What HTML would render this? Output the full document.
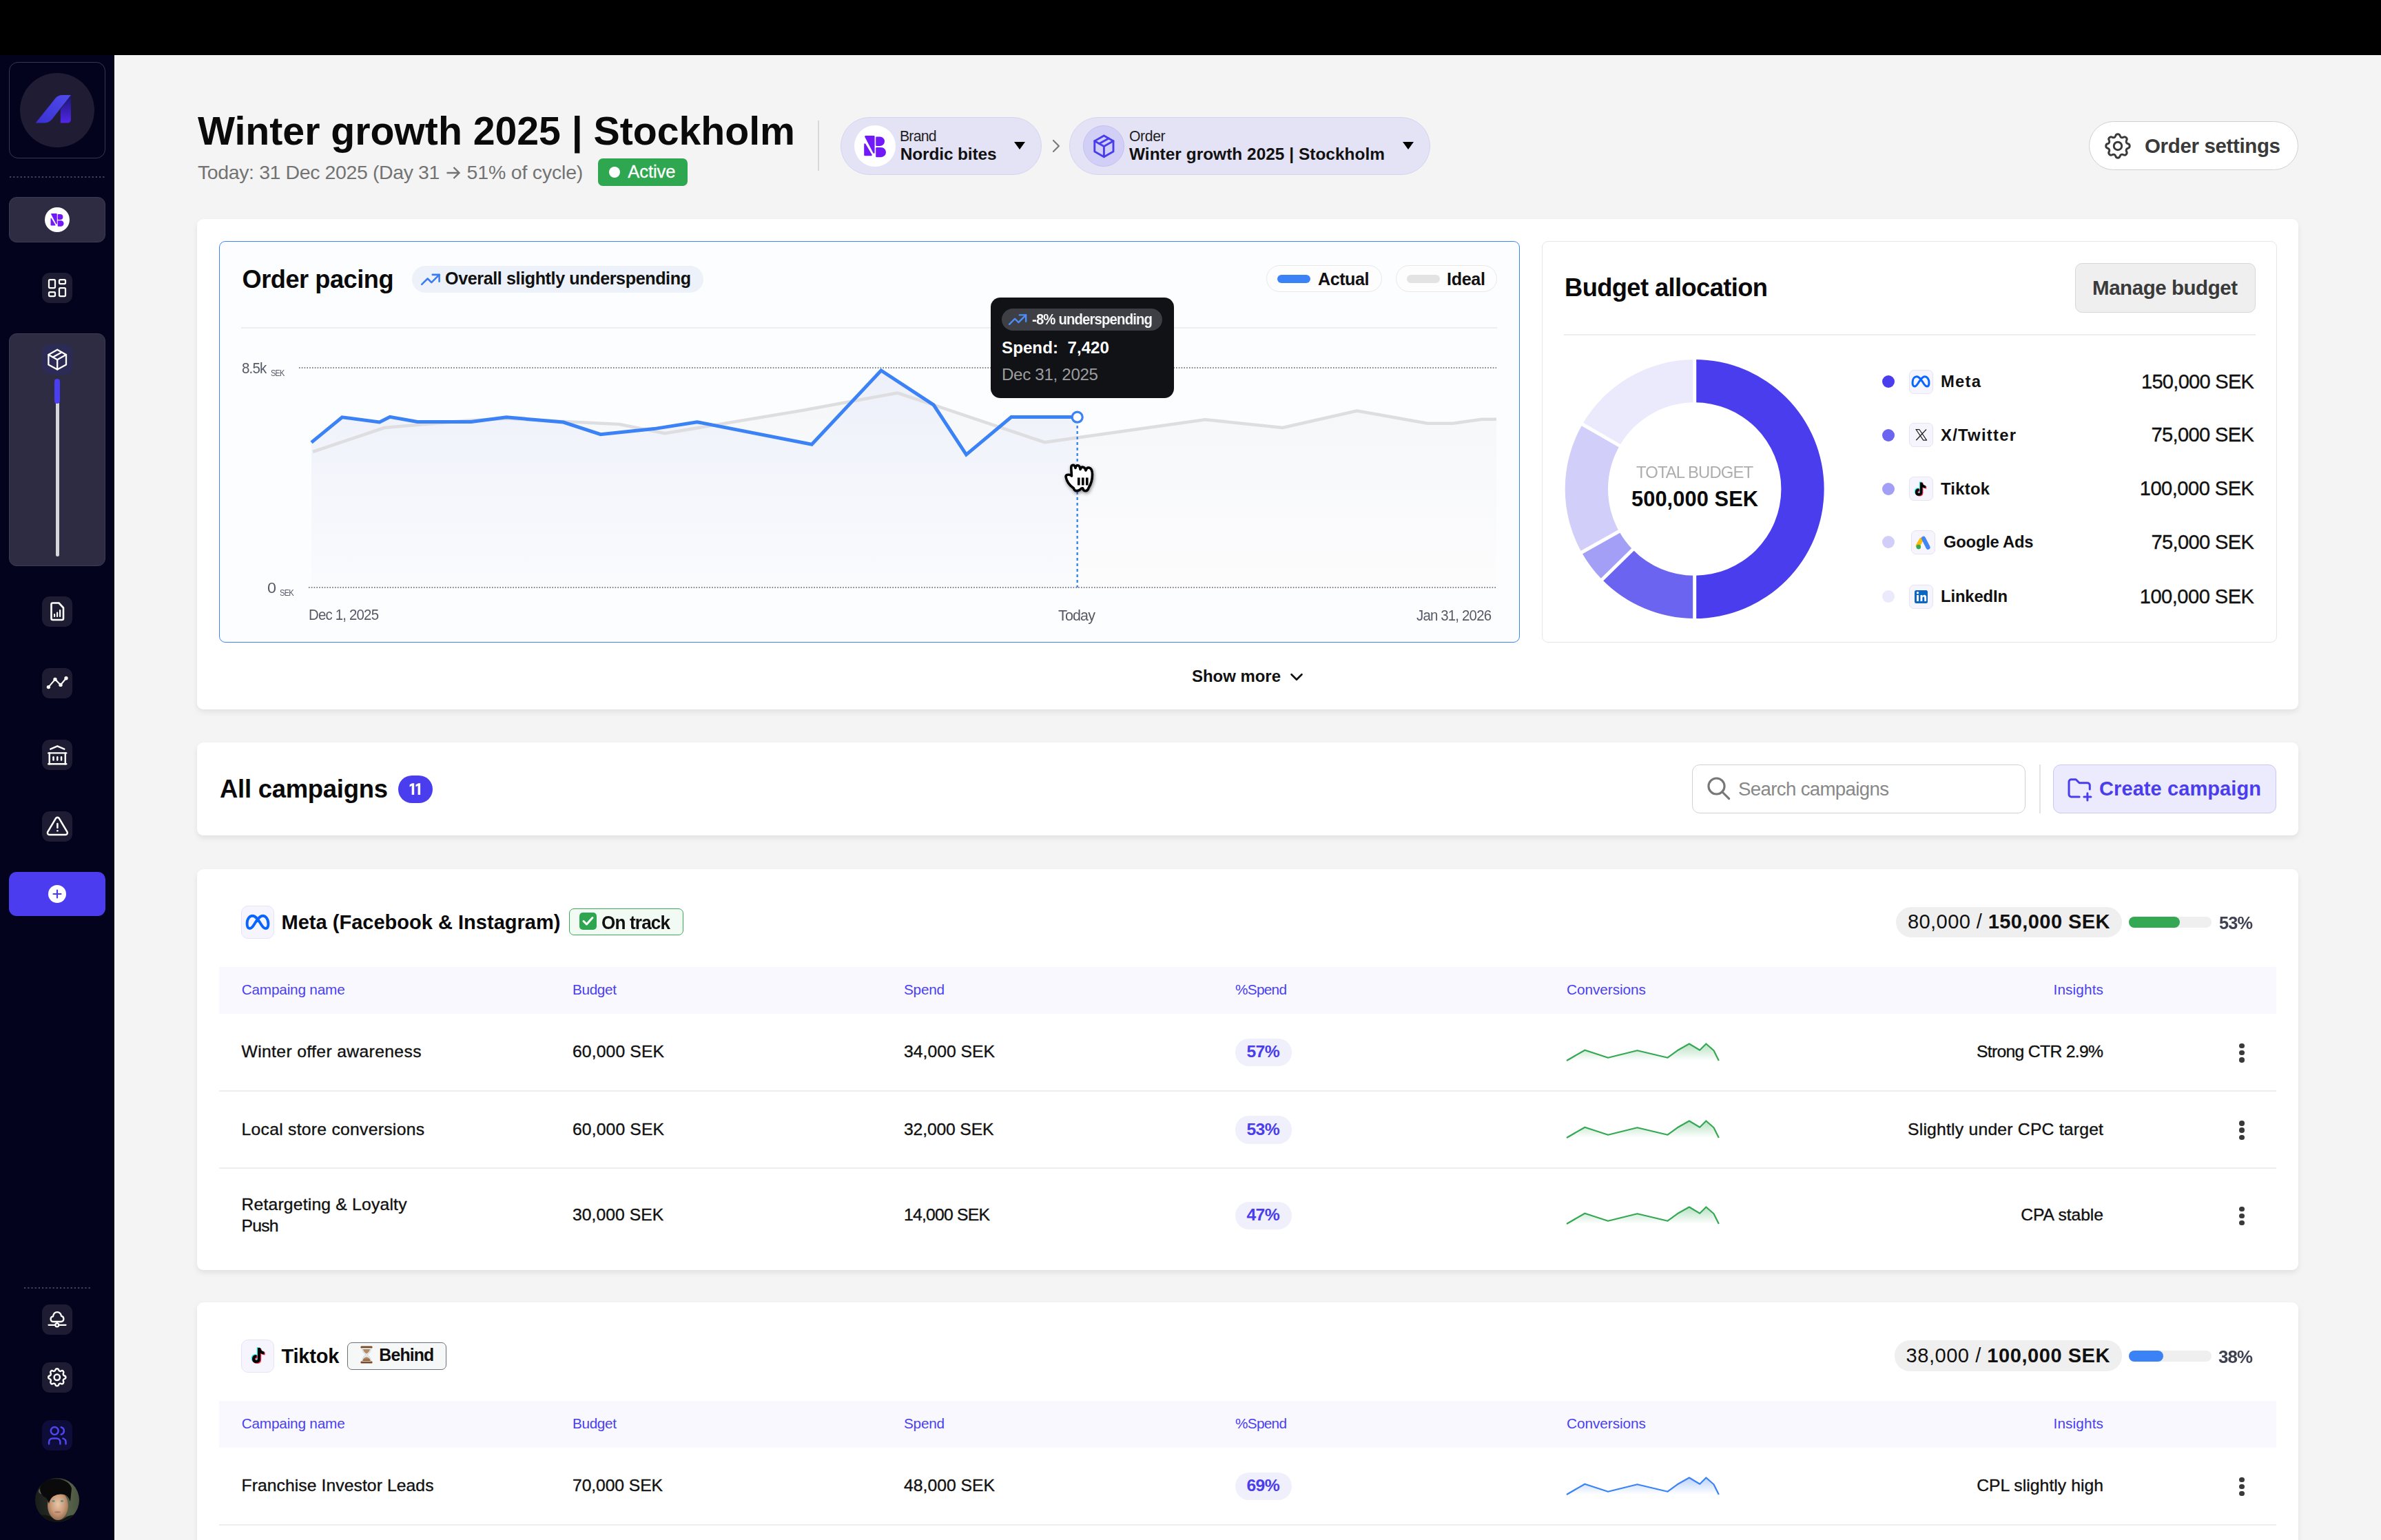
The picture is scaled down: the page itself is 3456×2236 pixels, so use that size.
<!DOCTYPE html><html><head><meta charset="utf-8"><title>Order dashboard</title><style>
html,body{margin:0;padding:0}
html{overflow:hidden;background:#f4f4f4}
body{width:3456px;height:2236px;position:relative;overflow:hidden;background:#f4f4f4;font-family:"Liberation Sans",sans-serif}
b{font-weight:700}
@media (max-width:2400px){html{zoom:0.5}}
</style></head><body>
<div style="position:absolute;left:0px;top:0px;width:3456px;height:80px;background:#000"></div>
<div style="position:absolute;left:0px;top:80px;width:166px;height:2156px;background:#03031d"></div>
<div style="position:absolute;left:13px;top:90px;width:140px;height:140px;box-sizing:border-box;border:1px solid #393750;border-radius:13px"></div>
<div style="position:absolute;left:29px;top:106px;width:108px;height:108px;border-radius:50%;background:#1f1c33"></div>
<svg style="position:absolute;left:40px;top:125px;" width="80" height="70" viewBox="0 0 80 70"><defs><linearGradient id="lg1" x1="0" y1="1" x2="1" y2="0"><stop offset="0" stop-color="#3a2fd2"/><stop offset="1" stop-color="#4f4cec"/></linearGradient>
<linearGradient id="lg2" x1="0" y1="0" x2="0" y2="1"><stop offset="0" stop-color="#1a1470"/><stop offset="1" stop-color="#5226ea"/></linearGradient></defs>
<path d="M11.7 53.4 L25.5 53.4 Q31 53.4 35.6 48 L63 12.9 L50 12.9 Q44.5 12.9 40.6 17.5 Z" fill="url(#lg1)"/>
<path d="M47.8 33.9 L63 12.9 L63 47.4 Q63 53.4 58 53.4 L47.8 53.4 Z" fill="url(#lg2)"/></svg>
<svg style="position:absolute;left:13px;top:255px;" width="140" height="4" viewBox="0 0 140 4"><line x1="1" y1="2" x2="140" y2="2" stroke="#5b5a70" stroke-width="1.6" stroke-dasharray="2.2 3"/></svg>
<div style="position:absolute;left:13px;top:286px;width:140px;height:66px;box-sizing:border-box;border:1px solid #3d3b52;border-radius:11px;background:#2e2c43"></div>
<div style="position:absolute;left:65px;top:301px;width:36px;height:36px;border-radius:50%;background:#fff"></div>
<svg style="position:absolute;left:65px;top:301px;" width="36" height="36" viewBox="0 0 36 36"><g transform="scale(0.6)"><g fill="#7119f7" stroke="#7119f7" stroke-width="2.4" stroke-linejoin="round"><path d="M16.3 16.3 L28.4 16.3 L28.4 39.5 Z"/><path d="M15.4 27.5 L24.6 43 L15.4 43 Z"/><path d="M32.4 17.7 L37.3 17.7 A5.5 5.5 0 0 1 37.3 28.7 L32.4 28.7 Z"/><path d="M32.4 33.1 L38.85 33.1 A5.95 5.95 0 0 1 38.85 45 L32.4 45 Z"/></g></g></svg>
<div style="position:absolute;left:61px;top:396px;width:44px;height:44px;border-radius:11px;background:#1e1c33"></div>
<svg style="position:absolute;left:65.00px;top:400.00px" width="36.00" height="36.00" viewBox="0 0 24 24"><g fill="none" stroke="#fff" stroke-width="1.5" stroke-linecap="round" stroke-linejoin="round"><path d="M5 4h4a1 1 0 0 1 1 1v6a1 1 0 0 1 -1 1h-4a1 1 0 0 1 -1 -1v-6a1 1 0 0 1 1 -1"/><path d="M5 16h4a1 1 0 0 1 1 1v2a1 1 0 0 1 -1 1h-4a1 1 0 0 1 -1 -1v-2a1 1 0 0 1 1 -1"/><path d="M15 12h4a1 1 0 0 1 1 1v6a1 1 0 0 1 -1 1h-4a1 1 0 0 1 -1 -1v-6a1 1 0 0 1 1 -1"/><path d="M15 4h4a1 1 0 0 1 1 1v2a1 1 0 0 1 -1 1h-4a1 1 0 0 1 -1 -1v-2a1 1 0 0 1 1 -1"/></g></svg>
<div style="position:absolute;left:13px;top:484px;width:140px;height:338px;box-sizing:border-box;border:1px solid #3d3b52;border-radius:11px;background:#2e2c43"></div>
<div style="position:absolute;left:61px;top:500px;width:44px;height:44px;border-radius:11px;background:#2c2b56"></div>
<svg style="position:absolute;left:63.80px;top:502.80px" width="38.40" height="38.40" viewBox="0 0 24 24"><g fill="none" stroke="#fff" stroke-width="1.45" stroke-linecap="round" stroke-linejoin="round"><path d="M12 3l8 4.5l0 9l-8 4.5l-8 -4.5l0 -9l8 -4.5"/><path d="M12 12l8 -4.5"/><path d="M12 12l0 9"/><path d="M12 12l-8 -4.5"/><path d="M16 5.25l-8 4.5"/></g></svg>
<div style="position:absolute;left:81px;top:575px;width:4.5px;height:233px;border-radius:3px;background:#d7d7db"></div>
<div style="position:absolute;left:79px;top:550px;width:8px;height:36px;border-radius:4px;background:#4a3ff0"></div>
<div style="position:absolute;left:61px;top:866px;width:44px;height:44px;border-radius:11px;background:#1e1c33"></div>
<div style="position:absolute;left:61px;top:970px;width:44px;height:44px;border-radius:11px;background:#1e1c33"></div>
<div style="position:absolute;left:61px;top:1074px;width:44px;height:44px;border-radius:11px;background:#1e1c33"></div>
<div style="position:absolute;left:61px;top:1178px;width:44px;height:44px;border-radius:11px;background:#1e1c33"></div>
<svg style="position:absolute;left:61px;top:866px;" width="44" height="44" viewBox="0 0 44 44"><g fill="none" stroke="#fff" stroke-width="2.6" stroke-linejoin="round" stroke-linecap="round"><path d="M13.5 11.5 Q13.5 9.5 15.5 9.5 L24.5 9.5 L31 16.5 L31 32 Q31 34 29 34 L15.5 34 Q13.5 34 13.5 32 Z"/></g><g fill="#fff"><rect x="17" y="25" width="2.2" height="5" rx="1"/><rect x="21" y="22.5" width="2.2" height="7.5" rx="1"/><rect x="25" y="19" width="2.2" height="11" rx="1"/></g></svg>
<svg style="position:absolute;left:63.80px;top:971.90px" width="38.40" height="38.40" viewBox="0 0 24 24"><g fill="none" stroke="#fff" stroke-width="1.35" stroke-linecap="round" stroke-linejoin="round"><path d="M4 16l6 -7l5 5l5 -6"/><path d="M15 14m-1 0a1 1 0 1 0 2 0a1 1 0 1 0 -2 0"/><path d="M10 9m-1 0a1 1 0 1 0 2 0a1 1 0 1 0 -2 0"/><path d="M4 16m-1 0a1 1 0 1 0 2 0a1 1 0 1 0 -2 0"/><path d="M20 8m-1 0a1 1 0 1 0 2 0a1 1 0 1 0 -2 0"/></g></svg>
<svg style="position:absolute;left:65.72px;top:1078.72px" width="34.56" height="34.56" viewBox="0 0 24 24"><g fill="none" stroke="#fff" stroke-width="1.7" stroke-linecap="round" stroke-linejoin="round"><path d="M3 21l18 0"/><path d="M3 10l18 0"/><path d="M5 6l7 -3l7 3"/><path d="M4 10l0 11"/><path d="M20 10l0 11"/><path d="M8 14l0 3"/><path d="M12 14l0 3"/><path d="M16 14l0 3"/></g></svg>
<svg style="position:absolute;left:65.60px;top:1183.08px" width="34.80" height="34.80" viewBox="0 0 24 24"><g fill="none" stroke="#fff" stroke-width="1.75" stroke-linecap="round" stroke-linejoin="round"><path d="M12 9v4"/><path d="M10.363 3.591l-8.106 13.534a1.914 1.914 0 0 0 1.636 2.871h16.214a1.914 1.914 0 0 0 1.636 -2.87l-8.106 -13.536a1.914 1.914 0 0 0 -3.274 0z"/><path d="M12 16h.01"/></g></svg>
<div style="position:absolute;left:13px;top:1266px;width:140px;height:64px;border-radius:11px;background:#4b3cf0"></div>
<div style="position:absolute;left:70px;top:1285px;width:26px;height:26px;border-radius:50%;background:#fff"></div>
<svg style="position:absolute;left:70px;top:1285px;" width="26" height="26" viewBox="0 0 26 26"><path d="M13 7.5 L13 18.5 M7.5 13 L18.5 13" stroke="#4b3cf0" stroke-width="2.2" stroke-linecap="round"/></svg>
<svg style="position:absolute;left:35px;top:1868px;" width="97" height="4" viewBox="0 0 97 4"><line x1="0" y1="2" x2="97" y2="2" stroke="#5b5a70" stroke-width="1.6" stroke-dasharray="2.2 3"/></svg>
<div style="position:absolute;left:61px;top:1894px;width:44px;height:44px;border-radius:11px;background:#1e1c33"></div>
<div style="position:absolute;left:61px;top:1978px;width:44px;height:44px;border-radius:11px;background:#1e1c33"></div>
<svg style="position:absolute;left:61px;top:1894px;" width="44" height="44" viewBox="0 0 44 44"><g fill="none" stroke="#fff" stroke-width="2.3" stroke-linecap="round" stroke-linejoin="round"><path d="M16.6 25 Q12.6 25 12.6 21.2 Q12.6 17.8 16 17.4 Q17 11.2 22 11.2 Q27 11.2 28 16.9 Q31.4 17.3 31.4 21.1 Q31.4 25 27.4 25 Z"/><path d="M9.5 29.8 L19.2 29.8 M24.4 29.8 L34.5 29.8 M21.8 25 L21.8 27.3"/><circle cx="21.8" cy="29.8" r="2.5"/></g></svg>
<svg style="position:absolute;left:66.20px;top:1983.20px" width="33.60" height="33.60" viewBox="0 0 24 24"><g fill="none" stroke="#fff" stroke-width="1.75" stroke-linecap="round" stroke-linejoin="round"><path d="M10.325 4.317c.426 -1.756 2.924 -1.756 3.35 0a1.724 1.724 0 0 0 2.573 1.066c1.543 -.94 3.31 .826 2.37 2.37a1.724 1.724 0 0 0 1.065 2.572c1.756 .426 1.756 2.924 0 3.35a1.724 1.724 0 0 0 -1.066 2.573c.94 1.543 -.826 3.31 -2.37 2.37a1.724 1.724 0 0 0 -2.572 1.065c-.426 1.756 -2.924 1.756 -3.35 0a1.724 1.724 0 0 0 -2.573 -1.066c-1.543 .94 -3.31 -.826 -2.37 -2.37a1.724 1.724 0 0 0 -1.065 -2.572c-1.756 -.426 -1.756 -2.924 0 -3.35a1.724 1.724 0 0 0 1.066 -2.573c-.94 -1.543 .826 -3.31 2.37 -2.37c1 .608 2.296 .07 2.572 -1.065z"/><path d="M9 12a3 3 0 1 0 6 0a3 3 0 0 0 -6 0"/></g></svg>
<div style="position:absolute;left:61px;top:2062px;width:44px;height:44px;border-radius:11px;background:#0e0c38"></div>
<svg style="position:absolute;left:66.68px;top:2068.18px" width="32.64" height="32.64" viewBox="0 0 24 24"><g fill="none" stroke="#4f46f2" stroke-width="1.85" stroke-linecap="round" stroke-linejoin="round"><path d="M9 7m-4 0a4 4 0 1 0 8 0a4 4 0 1 0 -8 0"/><path d="M3 21v-2a4 4 0 0 1 4 -4h4a4 4 0 0 1 4 4v2"/><path d="M16 3.13a4 4 0 0 1 0 7.75"/><path d="M21 21v-2a4 4 0 0 0 -3 -3.85"/></g></svg>
<svg style="position:absolute;left:51px;top:2146px;" width="64" height="64" viewBox="0 0 64 64"><defs><clipPath id="avc"><circle cx="32" cy="32" r="32"/></clipPath><radialGradient id="skin" cx="0.5" cy="0.45" r="0.6"><stop offset="0" stop-color="#e9c7a8"/><stop offset="0.55" stop-color="#c99b7a"/><stop offset="1" stop-color="#8f664b"/></radialGradient><linearGradient id="avbg" x1="0" y1="0" x2="1" y2="0"><stop offset="0" stop-color="#1a1d1a"/><stop offset="0.55" stop-color="#2a3027"/><stop offset="0.75" stop-color="#56624a"/><stop offset="1" stop-color="#4a5540"/></linearGradient></defs><g clip-path="url(#avc)"><rect width="64" height="64" fill="url(#avbg)"/><ellipse cx="12" cy="19" rx="7" ry="5" fill="#8a9585" opacity="0.55"/><ellipse cx="33" cy="40" rx="15" ry="21" fill="url(#skin)"/><path d="M7 16 Q9 1 30 1.5 Q49 2 53 15 L51 34 Q48 26 43.5 24.5 Q34 22 26.5 26.5 Q22 29.5 20 37 Q17.5 28 12.5 27 Q7 22 7 16 Z" fill="#0a0a0a"/><path d="M0 55 Q16 51 24 57 Q32 66 43 58 Q51 52 64 54 L64 64 L0 64 Z" fill="#111311"/><ellipse cx="26.5" cy="33.5" rx="2.2" ry="1.2" fill="#4f8f8a"/><ellipse cx="39" cy="33.5" rx="2.2" ry="1.2" fill="#4f8f8a"/><ellipse cx="32.5" cy="49.5" rx="4.5" ry="1.5" fill="#b47c6c"/></g></svg>
<div id="t1" style="position:absolute;left:287.0px;top:161.5px;font-size:57.27px;line-height:57.27px;font-weight:700;color:#0a0a0a;white-space:nowrap;letter-spacing:-0.044px;">Winter growth 2025 | Stockholm</div>
<div id="t2" style="position:absolute;left:287.0px;top:235.9px;font-size:28.49px;line-height:28.49px;font-weight:400;color:#737373;white-space:nowrap;letter-spacing:-0.385px;">Today: 31 Dec 2025 (Day 31</div>
<svg style="position:absolute;left:646px;top:240px;" width="24" height="22" viewBox="0 0 24 22"><path d="M2.5 11 L20 11 M12.5 3 L20.5 11 L12.5 19" fill="none" stroke="#737373" stroke-width="2.4" stroke-linejoin="miter"/></svg>
<div id="t3" style="position:absolute;left:677.6px;top:235.9px;font-size:28.49px;line-height:28.49px;font-weight:400;color:#737373;white-space:nowrap;letter-spacing:-0.190px;">51% of cycle)</div>
<div style="position:absolute;left:868px;top:230px;width:130px;height:40px;border-radius:7px;background:#2fa650"></div>
<div style="position:absolute;left:884px;top:242px;width:16px;height:16px;border-radius:50%;background:#fff"></div>
<div id="t4" style="position:absolute;left:911.2px;top:236.9px;font-size:25.58px;line-height:25.58px;font-weight:400;color:#fff;white-space:nowrap;letter-spacing:-0.071px;-webkit-text-stroke:0.3px #fff">Active</div>
<div style="position:absolute;left:1187px;top:175px;width:2px;height:73px;background:#d9d9d9"></div>
<div style="position:absolute;left:1220px;top:170px;width:292px;height:84px;box-sizing:border-box;border-radius:42px;background:#e4e2f5;border:1.5px solid #d6d3f1"></div>
<div style="position:absolute;left:1240px;top:182px;width:60px;height:60px;border-radius:50%;background:#fff"></div>
<svg style="position:absolute;left:1240px;top:182px;" width="60" height="60" viewBox="0 0 60 60"><g fill="#7119f7" stroke="#7119f7" stroke-width="2.4" stroke-linejoin="round"><path d="M16.3 16.3 L28.4 16.3 L28.4 39.5 Z"/><path d="M15.4 27.5 L24.6 43 L15.4 43 Z"/><path d="M32.4 17.7 L37.3 17.7 A5.5 5.5 0 0 1 37.3 28.7 L32.4 28.7 Z"/><path d="M32.4 33.1 L38.85 33.1 A5.95 5.95 0 0 1 38.85 45 L32.4 45 Z"/></g></svg>
<div id="t5" style="position:absolute;left:1306.0px;top:186.6px;font-size:21.22px;line-height:21.22px;font-weight:400;color:#1f1f1f;white-space:nowrap;letter-spacing:-0.781px;">Brand</div>
<div id="t6" style="position:absolute;left:1306.8px;top:211.9px;font-size:24.42px;line-height:24.42px;font-weight:700;color:#111;white-space:nowrap;letter-spacing:-0.122px;">Nordic bites</div>
<svg style="position:absolute;left:1470px;top:204px;" width="20" height="16" viewBox="0 0 20 16"><path d="M2 2 L18 2 L10 13 Z" fill="#000"/></svg>
<svg style="position:absolute;left:1516.54px;top:196.04px" width="31.92" height="31.92" viewBox="0 0 24 24"><g fill="none" stroke="#7a7a7a" stroke-width="1.6" stroke-linecap="round" stroke-linejoin="round"><path d="M9 6l6 6l-6 6"/></g></svg>
<div style="position:absolute;left:1552px;top:170px;width:524px;height:84px;box-sizing:border-box;border-radius:42px;background:#e4e2f5;border:1.5px solid #d6d3f1"></div>
<div style="position:absolute;left:1572px;top:182px;width:60px;height:60px;box-sizing:border-box;border-radius:50%;background:#d2cff6;border:1.5px solid #c4c0f0"></div>
<svg style="position:absolute;left:1581.60px;top:191.60px" width="40.80" height="40.80" viewBox="0 0 24 24"><g fill="none" stroke="#4a3ded" stroke-width="1.7" stroke-linecap="round" stroke-linejoin="round"><path d="M12 3l8 4.5l0 9l-8 4.5l-8 -4.5l0 -9l8 -4.5"/><path d="M12 12l8 -4.5"/><path d="M12 12l0 9"/><path d="M12 12l-8 -4.5"/><path d="M16 5.25l-8 4.5"/></g></svg>
<div id="t7" style="position:absolute;left:1639.0px;top:186.6px;font-size:21.22px;line-height:21.22px;font-weight:400;color:#1f1f1f;white-space:nowrap;letter-spacing:-0.387px;">Order</div>
<div id="t8" style="position:absolute;left:1639.0px;top:211.9px;font-size:24.42px;line-height:24.42px;font-weight:700;color:#111;white-space:nowrap;letter-spacing:0.032px;">Winter growth 2025 | Stockholm</div>
<svg style="position:absolute;left:2034px;top:204px;" width="20" height="16" viewBox="0 0 20 16"><path d="M2 2 L18 2 L10 13 Z" fill="#000"/></svg>
<div style="position:absolute;left:3032px;top:176px;width:304px;height:71px;box-sizing:border-box;border-radius:36px;background:#fff;border:1.5px solid #d0d0d0"></div>
<svg style="position:absolute;left:3051.02px;top:188.72px" width="45.96" height="45.96" viewBox="0 0 24 24"><g fill="none" stroke="#3a3a3a" stroke-width="1.55" stroke-linecap="round" stroke-linejoin="round"><path d="M10.325 4.317c.426 -1.756 2.924 -1.756 3.35 0a1.724 1.724 0 0 0 2.573 1.066c1.543 -.94 3.31 .826 2.37 2.37a1.724 1.724 0 0 0 1.065 2.572c1.756 .426 1.756 2.924 0 3.35a1.724 1.724 0 0 0 -1.066 2.573c.94 1.543 -.826 3.31 -2.37 2.37a1.724 1.724 0 0 0 -2.572 1.065c-.426 1.756 -2.924 1.756 -3.35 0a1.724 1.724 0 0 0 -2.573 -1.066c-1.543 .94 -3.31 -.826 -2.37 -2.37a1.724 1.724 0 0 0 -1.065 -2.572c-1.756 -.426 -1.756 -2.924 0 -3.35a1.724 1.724 0 0 0 1.066 -2.573c-.94 -1.543 .826 -3.31 2.37 -2.37c1 .608 2.296 .07 2.572 -1.065z"/><path d="M9 12a3 3 0 1 0 6 0a3 3 0 0 0 -6 0"/></g></svg>
<div id="t9" style="position:absolute;left:3113.0px;top:197.2px;font-size:29.51px;line-height:29.51px;font-weight:700;color:#3a3a3a;white-space:nowrap;letter-spacing:-0.357px;">Order settings</div>
<div style="position:absolute;left:286px;top:318px;width:3050px;height:712px;border-radius:9px;background:#fff;box-shadow:0 4px 8px rgba(0,0,0,0.08)"></div>
<div style="position:absolute;left:318px;top:350px;width:1888px;height:583px;box-sizing:border-box;border-radius:9px;background:#fcfdfe;border:1.4px solid #3f84f4"></div>
<div id="t10" style="position:absolute;left:351.5px;top:387.6px;font-size:36.19px;line-height:36.19px;font-weight:700;color:#0a0a0a;white-space:nowrap;letter-spacing:-0.466px;">Order pacing</div>
<div style="position:absolute;left:598px;top:386px;width:423px;height:39px;border-radius:20px;background:#edf1fa"></div>
<svg style="position:absolute;left:608.38px;top:388.58px" width="33.84" height="33.84" viewBox="0 0 24 24"><g fill="none" stroke="#3b7bf0" stroke-width="1.8" stroke-linecap="round" stroke-linejoin="round"><path d="M3 17l6 -6l4 4l8 -8"/><path d="M14 7l7 0l0 7"/></g></svg>
<div id="t11" style="position:absolute;left:646.0px;top:392.0px;font-size:25.15px;line-height:25.15px;font-weight:700;color:#111;white-space:nowrap;letter-spacing:-0.407px;">Overall slightly underspending</div>
<div style="position:absolute;left:1838px;top:385px;width:168px;height:39px;box-sizing:border-box;border-radius:20px;background:#fdfdfe;border:1.5px solid #e8e8ea"></div>
<div style="position:absolute;left:1854px;top:399px;width:48px;height:12px;border-radius:6px;background:#3b82f6"></div>
<div id="t12" style="position:absolute;left:1913.0px;top:392.5px;font-size:25.15px;line-height:25.15px;font-weight:700;color:#111;white-space:nowrap;letter-spacing:-0.469px;">Actual</div>
<div style="position:absolute;left:2026px;top:385px;width:147px;height:39px;box-sizing:border-box;border-radius:20px;background:#fdfdfe;border:1.5px solid #e8e8ea"></div>
<div style="position:absolute;left:2042px;top:399px;width:48px;height:12px;border-radius:6px;background:#e3e3e3"></div>
<div id="t13" style="position:absolute;left:2100.0px;top:392.5px;font-size:25.15px;line-height:25.15px;font-weight:700;color:#111;white-space:nowrap;letter-spacing:-0.324px;">Ideal</div>
<div style="position:absolute;left:350px;top:475px;width:1823px;height:2px;background:#ededf0"></div>
<div id="t14" style="position:absolute;left:350.6px;top:524.0px;font-size:22.53px;line-height:22.53px;font-weight:400;color:#555a66;white-space:nowrap;letter-spacing:-0.900px;;transform:scaleX(0.9131);transform-origin:left top">8.5k</div>
<div id="t15" style="position:absolute;left:392.6px;top:536.0px;font-size:12.35px;line-height:12.35px;font-weight:400;color:#555a66;white-space:nowrap;letter-spacing:-0.900px;;transform:scaleX(0.8907);transform-origin:left top">SEK</div>
<div id="t16" style="position:absolute;left:388.0px;top:842.4px;font-size:22.82px;line-height:22.82px;font-weight:400;color:#555a66;white-space:nowrap;letter-spacing:0.312px;;transform:scaleX(1.0246);transform-origin:left top">0</div>
<div id="t17" style="position:absolute;left:406.0px;top:855.0px;font-size:12.35px;line-height:12.35px;font-weight:400;color:#555a66;white-space:nowrap;letter-spacing:-0.900px;;transform:scaleX(0.9082);transform-origin:left top">SEK</div>
<div id="t18" style="position:absolute;left:448.0px;top:881.2px;font-size:22.67px;line-height:22.67px;font-weight:400;color:#555a66;white-space:nowrap;letter-spacing:-0.900px;;transform:scaleX(0.9012);transform-origin:left top">Dec 1, 2025</div>
<div id="t19" style="position:absolute;left:1536.0px;top:881.6px;font-size:22.67px;line-height:22.67px;font-weight:400;color:#555a66;white-space:nowrap;letter-spacing:-0.900px;;transform:scaleX(0.9496);transform-origin:left top">Today</div>
<div id="t20" style="position:absolute;left:2056.0px;top:881.6px;font-size:22.67px;line-height:22.67px;font-weight:400;color:#555a66;white-space:nowrap;letter-spacing:-0.900px;;transform:scaleX(0.9000);transform-origin:left top">Jan 31, 2026</div>
<div id="t21" style="position:absolute;left:1730.0px;top:969.7px;font-size:23.98px;line-height:23.98px;font-weight:700;color:#111;white-space:nowrap;letter-spacing:-0.023px;">Show more</div>
<svg style="position:absolute;left:1866.50px;top:967.50px" width="30.00" height="30.00" viewBox="0 0 24 24"><g fill="none" stroke="#111" stroke-width="2.1" stroke-linecap="round" stroke-linejoin="round"><path d="M6 9l6 6l6 -6"/></g></svg>
<svg style="position:absolute;left:318px;top:350px;" width="1888" height="583" viewBox="0 0 1888 583"><defs><linearGradient id="gb" x1="0" y1="0" x2="0" y2="1"><stop offset="0" stop-color="#edf0fa"/><stop offset="1" stop-color="#fafbfd"/></linearGradient>
<linearGradient id="gg" x1="0" y1="0" x2="0" y2="1"><stop offset="0" stop-color="#f6f7f9"/><stop offset="1" stop-color="#fcfcfd"/></linearGradient></defs>
<path d="M136,503 L136.0,306.0 L240.0,271.0 L361.0,260.6 L417.0,257.7 L500.0,262.0 L581.0,266.0 L647.0,279.3 L846.2,246.0 L984.6,220.5 L1038.4,238.4 L1198.5,292.2 L1431.4,259.2 L1543.6,271.0 L1651.7,246.4 L1754.2,264.8 L1790.8,264.8 L1833.1,258.7 L1854.0,258.7 L1854,503 Z" fill="url(#gg)"/>
<path d="M134,503 L134.0,292.4 L178.6,255.8 L232.9,263.0 L248.0,255.3 L288.0,262.5 L365.8,262.5 L417.2,255.8 L499.8,263.0 L553.7,280.7 L631.5,272.6 L693.8,262.7 L860.3,295.3 L961.0,187.9 L1037.1,237.9 L1084.5,310.1 L1149.8,255.6 L1245.7,255.6 L1245.7,503 Z" fill="url(#gb)"/>
<line x1="116" y1="184" x2="1854" y2="184" stroke="#5a5a60" stroke-width="1.3" stroke-dasharray="1.6 2.2"/>
<line x1="130" y1="503" x2="1854" y2="503" stroke="#5a5a60" stroke-width="1.3" stroke-dasharray="1.6 2.2"/>
<polyline points="136.0,306.0 240.0,271.0 361.0,260.6 417.0,257.7 500.0,262.0 581.0,266.0 647.0,279.3 846.2,246.0 984.6,220.5 1038.4,238.4 1198.5,292.2 1431.4,259.2 1543.6,271.0 1651.7,246.4 1754.2,264.8 1790.8,264.8 1833.1,258.7 1854.0,258.7" fill="none" stroke="#dedee1" stroke-width="4.6" stroke-linejoin="round"/>
<polyline points="134.0,292.4 178.6,255.8 232.9,263.0 248.0,255.3 288.0,262.5 365.8,262.5 417.2,255.8 499.8,263.0 553.7,280.7 631.5,272.6 693.8,262.7 860.3,295.3 961.0,187.9 1037.1,237.9 1084.5,310.1 1149.8,255.6 1245.7,255.6" fill="none" stroke="#3b82f6" stroke-width="5" stroke-linejoin="miter"/>
<line x1="1245.7" y1="268" x2="1245.7" y2="503" stroke="#3b82f6" stroke-width="2.4" stroke-dasharray="4 4"/>
<circle cx="1245.7" cy="255.70000000000005" r="7.5" fill="#fff" stroke="#3b82f6" stroke-width="3.2"/></svg>
<svg style="position:absolute;left:1530px;top:660px;filter:drop-shadow(1px 2px 2.5px rgba(0,0,0,0.45))" width="70" height="70" viewBox="0 0 70 70"><path d="M17.2 33 Q16.5 29.5 20 29.3 Q23.5 29 25.5 31 L24.8 20 Q24.5 15.5 27.5 15.3 Q30 15.3 31 19.5 Q32 15.5 34.5 15.8 Q37.5 16.3 38 21.5 Q39.5 17.8 42 18.2 Q45 18.8 46 23 Q47.5 18.5 50.5 19 Q55.5 20 55.5 29 Q55.5 40 50 48.5 Q49 52.5 45.5 52.8 Q42.5 52.8 41.8 49 Q39.5 48.5 37.5 51 Q35 53 31 52.5 Q28.8 51.5 28.5 49 Q23 45 20.5 41 Q18 37 17.2 33 Z" fill="#fff" stroke="#000" stroke-width="3.6" stroke-linejoin="round"/><rect x="34" y="33.5" width="3.6" height="11" fill="#000"/><rect x="40" y="33.5" width="3.6" height="11" fill="#000"/><rect x="46" y="33.5" width="3.6" height="11" fill="#000"/></svg>
<div style="position:absolute;left:1438px;top:432px;width:266px;height:146px;border-radius:14px;background:#111216"></div>
<div style="position:absolute;left:1454px;top:448px;width:233px;height:32px;border-radius:16px;background:#3e3f45"></div>
<svg style="position:absolute;left:1460.92px;top:447.92px" width="32.16" height="32.16" viewBox="0 0 24 24"><g fill="none" stroke="#4d8df5" stroke-width="1.8" stroke-linecap="round" stroke-linejoin="round"><path d="M3 17l6 -6l4 4l8 -8"/><path d="M14 7l7 0l0 7"/></g></svg>
<div id="t22" style="position:absolute;left:1498.0px;top:453.0px;font-size:21.22px;line-height:21.22px;font-weight:700;color:#f5f5f5;white-space:nowrap;letter-spacing:-0.900px;;transform:scaleX(0.9590);transform-origin:left top">-8% underspending</div>
<div id="t23" style="position:absolute;left:1454.0px;top:493.3px;font-size:24.13px;line-height:24.13px;font-weight:700;color:#fff;white-space:nowrap;letter-spacing:0.039px;">Spend:&nbsp; 7,420</div>
<div id="t24" style="position:absolute;left:1454.0px;top:532.0px;font-size:24.13px;line-height:24.13px;font-weight:400;color:#9d9d9f;white-space:nowrap;letter-spacing:-0.320px;">Dec 31, 2025</div>
<div style="position:absolute;left:2238px;top:350px;width:1067px;height:583px;box-sizing:border-box;border-radius:9px;background:#fff;border:1.5px solid #e6e6e6"></div>
<div id="t25" style="position:absolute;left:2271.0px;top:400.2px;font-size:36.34px;line-height:36.34px;font-weight:700;color:#0a0a0a;white-space:nowrap;letter-spacing:-0.610px;">Budget allocation</div>
<div style="position:absolute;left:3012px;top:382px;width:262px;height:72px;box-sizing:border-box;border-radius:10px;background:#efefef;border:1.5px solid #d8d8d8"></div>
<div id="t26" style="position:absolute;left:3037.0px;top:403.3px;font-size:29.51px;line-height:29.51px;font-weight:700;color:#3a3a3a;white-space:nowrap;letter-spacing:-0.445px;">Manage budget</div>
<div style="position:absolute;left:2270px;top:485px;width:1004px;height:2px;background:#ededed"></div>
<svg style="position:absolute;left:2259px;top:510px;" width="401" height="401" viewBox="0 0 401 401"><path d="M200.70 12.00 A188 188 0 0 1 200.70 388.00 L200.70 325.70 A125.7 125.7 0 0 0 200.70 74.30 Z" fill="#4a3ded"/><path d="M200.70 388.00 A188 188 0 0 1 66.38 331.54 L110.89 287.95 A125.7 125.7 0 0 0 200.70 325.70 Z" fill="#6b64f1"/><path d="M66.38 331.54 A188 188 0 0 1 36.75 292.00 L91.08 261.52 A125.7 125.7 0 0 0 110.89 287.95 Z" fill="#a39ef6"/><path d="M36.75 292.00 A188 188 0 0 1 37.89 106.00 L91.84 137.15 A125.7 125.7 0 0 0 91.08 261.52 Z" fill="#d1cef9"/><path d="M37.89 106.00 A188 188 0 0 1 200.70 12.00 L200.70 74.30 A125.7 125.7 0 0 0 91.84 137.15 Z" fill="#ebe9fc"/><line x1="200.70" y1="76.30" x2="200.70" y2="10.00" stroke="#fff" stroke-width="5"/><line x1="200.70" y1="323.70" x2="200.70" y2="390.00" stroke="#fff" stroke-width="5"/><line x1="112.32" y1="286.55" x2="64.95" y2="332.94" stroke="#fff" stroke-width="5"/><line x1="92.83" y1="260.54" x2="35.01" y2="292.98" stroke="#fff" stroke-width="5"/><line x1="93.57" y1="138.15" x2="36.16" y2="105.00" stroke="#fff" stroke-width="5"/></svg>
<div id="t27" style="position:absolute;left:2375.0px;top:673.7px;font-size:23.98px;line-height:23.98px;font-weight:400;color:#adadad;white-space:nowrap;letter-spacing:-0.900px;;transform:scaleX(0.9954);transform-origin:left top">TOTAL BUDGET</div>
<div id="t28" style="position:absolute;left:2368.0px;top:710.4px;font-size:30.81px;line-height:30.81px;font-weight:700;color:#0a0a0a;white-space:nowrap;letter-spacing:0.080px;">500,000 SEK</div>
<div style="position:absolute;left:2732px;top:545px;width:18px;height:18px;border-radius:50%;background:#4a3ded"></div>
<div style="position:absolute;left:2770.5px;top:536.5px;width:35px;height:35px;box-sizing:border-box;border-radius:7px;background:#f6f5fd;border:1px solid #e6e3f7"></div>
<svg style="position:absolute;left:2774.0px;top:540px;" width="28" height="28" viewBox="0 0 28 28"><g transform="scale(0.7777777777777778)"><path d="M2.6 20 C2.6 12.5 6.5 8.8 10.5 8.8 C15 8.8 18.5 14 22 19.5 C24.5 23.5 26.5 27 29.5 27 C32 27 33.4 24.5 33.4 20.5 C33.4 13 29.5 8.8 25.5 8.8 C21 8.8 17.5 14 14 19.5 C11.5 23.5 9.5 27 6.5 27 C4 27 2.6 24.5 2.6 20 Z" fill="none" stroke="#0866ff" stroke-width="3.9" stroke-linejoin="round"/></g></svg>
<div id="t29" style="position:absolute;left:2817.0px;top:542.0px;font-size:23.84px;line-height:23.84px;font-weight:700;color:#111;white-space:nowrap;letter-spacing:1.234px;">Meta</div>
<div id="t30" style="position:absolute;left:3108.0px;top:539.6px;font-size:29.07px;line-height:29.07px;font-weight:400;color:#111;white-space:nowrap;letter-spacing:-0.730px;;-webkit-text-stroke:0.35px #111">150,000 SEK</div>
<div style="position:absolute;left:2732px;top:622.8px;width:18px;height:18px;border-radius:50%;background:#6b64f1"></div>
<div style="position:absolute;left:2770.5px;top:614.3px;width:35px;height:35px;box-sizing:border-box;border-radius:7px;background:#f6f5fd;border:1px solid #e6e3f7"></div>
<svg style="position:absolute;left:2770.5px;top:614.3px;" width="35" height="35" viewBox="0 0 35 35"><path d="M10 9.5 L14.8 9.5 L25.5 25.2 L20.7 25.2 Z" fill="none" stroke="#222" stroke-width="1.25" stroke-linejoin="round"/><path d="M25 9.5 L10.2 25.2" stroke="#222" stroke-width="1.25"/></svg>
<div id="t31" style="position:absolute;left:2817.0px;top:619.8px;font-size:23.84px;line-height:23.84px;font-weight:700;color:#111;white-space:nowrap;letter-spacing:1.268px;">X/Twitter</div>
<div id="t32" style="position:absolute;left:3122.5px;top:617.4px;font-size:29.07px;line-height:29.07px;font-weight:400;color:#111;white-space:nowrap;letter-spacing:-0.625px;;-webkit-text-stroke:0.35px #111">75,000 SEK</div>
<div style="position:absolute;left:2732px;top:700.8px;width:18px;height:18px;border-radius:50%;background:#a39ef6"></div>
<div style="position:absolute;left:2770.5px;top:692.3px;width:35px;height:35px;box-sizing:border-box;border-radius:7px;background:#f6f5fd;border:1px solid #e6e3f7"></div>
<svg style="position:absolute;left:2772.3px;top:696.0px;" width="28" height="28" viewBox="0 0 28 28"><g transform="scale(0.875)"><path d="M17 5 L21 5 Q21.5 10 26.5 10.5 L26.5 14.5 Q23 14.5 21 12.8 L21 21 Q21 27 15 27 Q9 27 9 21 Q9 15 15.5 15 L15.5 19 Q13 19 13 21 Q13 23 15 23 Q17 23 17 21 Z" fill="#25f4ee" transform="translate(-1.2 -1)"/><path d="M17 5 L21 5 Q21.5 10 26.5 10.5 L26.5 14.5 Q23 14.5 21 12.8 L21 21 Q21 27 15 27 Q9 27 9 21 Q9 15 15.5 15 L15.5 19 Q13 19 13 21 Q13 23 15 23 Q17 23 17 21 Z" fill="#fe2c55" transform="translate(1.2 1)"/><path d="M17 5 L21 5 Q21.5 10 26.5 10.5 L26.5 14.5 Q23 14.5 21 12.8 L21 21 Q21 27 15 27 Q9 27 9 21 Q9 15 15.5 15 L15.5 19 Q13 19 13 21 Q13 23 15 23 Q17 23 17 21 Z" fill="#000"/></g></svg>
<div id="t33" style="position:absolute;left:2817.0px;top:697.8px;font-size:23.84px;line-height:23.84px;font-weight:700;color:#111;white-space:nowrap;letter-spacing:0.250px;">Tiktok</div>
<div id="t34" style="position:absolute;left:3105.8px;top:695.4px;font-size:29.07px;line-height:29.07px;font-weight:400;color:#111;white-space:nowrap;letter-spacing:-0.510px;;-webkit-text-stroke:0.35px #111">100,000 SEK</div>
<div style="position:absolute;left:2732px;top:778.4px;width:18px;height:18px;border-radius:50%;background:#d1cef9"></div>
<div style="position:absolute;left:2774px;top:769.9px;width:35px;height:35px;box-sizing:border-box;border-radius:7px;background:#f6f5fd;border:1px solid #e6e3f7"></div>
<svg style="position:absolute;left:2774px;top:769.9px;" width="35" height="35" viewBox="0 0 35 35"><path d="M14.7 13.7 L9.8 22.3" stroke="#fbbc04" stroke-width="6" stroke-linecap="round"/><path d="M18 11.8 L24.5 24.7" stroke="#4285f4" stroke-width="6.2" stroke-linecap="round"/><circle cx="10.8" cy="24.1" r="3.3" fill="#34a853"/></svg>
<div id="t35" style="position:absolute;left:2821.0px;top:775.4px;font-size:23.84px;line-height:23.84px;font-weight:700;color:#111;white-space:nowrap;letter-spacing:-0.248px;">Google Ads</div>
<div id="t36" style="position:absolute;left:3122.5px;top:773.0px;font-size:29.07px;line-height:29.07px;font-weight:400;color:#111;white-space:nowrap;letter-spacing:-0.625px;;-webkit-text-stroke:0.35px #111">75,000 SEK</div>
<div style="position:absolute;left:2732px;top:857.4px;width:18px;height:18px;border-radius:50%;background:#ebe9fc"></div>
<div style="position:absolute;left:2770.5px;top:848.9px;width:35px;height:35px;box-sizing:border-box;border-radius:7px;background:#f6f5fd;border:1px solid #e6e3f7"></div>
<svg style="position:absolute;left:2770.5px;top:848.9px;" width="35" height="35" viewBox="0 0 35 35"><rect x="8" y="8" width="19" height="19" rx="2.5" fill="#0a66c2"/><rect x="11" y="15" width="3" height="9" fill="#fff"/><circle cx="12.5" cy="11.8" r="1.7" fill="#fff"/><path d="M16.5 24 L16.5 15 L19.3 15 L19.3 16.5 Q20.3 14.8 22.3 14.8 Q25 14.8 25 18.5 L25 24 L22.2 24 L22.2 19 Q22.2 17.3 20.9 17.3 Q19.3 17.3 19.3 19.3 L19.3 24 Z" fill="#fff"/></svg>
<div id="t37" style="position:absolute;left:2817.0px;top:854.4px;font-size:23.84px;line-height:23.84px;font-weight:700;color:#111;white-space:nowrap;letter-spacing:-0.138px;">LinkedIn</div>
<div id="t38" style="position:absolute;left:3105.8px;top:852.0px;font-size:29.07px;line-height:29.07px;font-weight:400;color:#111;white-space:nowrap;letter-spacing:-0.510px;;-webkit-text-stroke:0.35px #111">100,000 SEK</div>
<div style="position:absolute;left:286px;top:1078px;width:3050px;height:135px;border-radius:9px;background:#fff;box-shadow:0 4px 8px rgba(0,0,0,0.08)"></div>
<div id="t39" style="position:absolute;left:319.0px;top:1127.9px;font-size:36.48px;line-height:36.48px;font-weight:700;color:#0a0a0a;white-space:nowrap;letter-spacing:-0.272px;">All campaigns</div>
<div style="position:absolute;left:578px;top:1126px;width:50px;height:40px;border-radius:20px;background:#4a3ded"></div>
<svg style="position:absolute;left:578px;top:1126px;" width="50" height="40" viewBox="0 0 50 40"><path d="M19.7 28 L23.2 28 L23.2 11.200000000000045 L20.4 11.200000000000045 L16.6 13.299999999999955 L16.6 16.40000000000009 L19.7 14.799999999999955 Z" fill="#fff"/><path d="M28.6 28 L32.1 28 L32.1 11.200000000000045 L29.3 11.200000000000045 L25.5 13.299999999999955 L25.5 16.40000000000009 L28.6 14.799999999999955 Z" fill="#fff"/></svg>
<div style="position:absolute;left:2456px;top:1110px;width:484px;height:71px;box-sizing:border-box;border-radius:11px;background:#fff;border:1.5px solid #d2d2d2"></div>
<svg style="position:absolute;left:2475.20px;top:1125.20px" width="39.60" height="39.60" viewBox="0 0 24 24"><g fill="none" stroke="#777" stroke-width="1.9" stroke-linecap="round" stroke-linejoin="round"><path d="M10 10m-7 0a7 7 0 1 0 14 0a7 7 0 1 0 -14 0"/><path d="M21 21l-6 -6"/></g></svg>
<div id="t40" style="position:absolute;left:2523.0px;top:1132.0px;font-size:27.62px;line-height:27.62px;font-weight:400;color:#888;white-space:nowrap;letter-spacing:-0.645px;">Search campaigns</div>
<div style="position:absolute;left:2959.5px;top:1110px;width:2px;height:71px;background:#e3e3e3"></div>
<div style="position:absolute;left:2980px;top:1110px;width:324px;height:71px;box-sizing:border-box;border-radius:11px;background:#ecebfd;border:1.5px solid #cbc7f5"></div>
<svg style="position:absolute;left:2998.00px;top:1125.16px" width="40.32" height="40.32" viewBox="0 0 24 24"><g fill="none" stroke="#4a3ded" stroke-width="1.8" stroke-linecap="round" stroke-linejoin="round"><path d="M12 19h-7a2 2 0 0 1 -2 -2v-11a2 2 0 0 1 2 -2h4l3 3h7a2 2 0 0 1 2 2v3.5"/><path d="M16 19h6"/><path d="M19 16v6"/></g></svg>
<div id="t41" style="position:absolute;left:3047.0px;top:1130.8px;font-size:29.07px;line-height:29.07px;font-weight:700;color:#4a3ded;white-space:nowrap;letter-spacing:0.057px;">Create campaign</div>
<div style="position:absolute;left:286px;top:1262px;width:3050px;height:582px;border-radius:9px;background:#fff;box-shadow:0 4px 8px rgba(0,0,0,0.08)"></div>
<div style="position:absolute;left:350px;top:1315px;width:48px;height:48px;box-sizing:border-box;border-radius:10px;background:#f6f5fe;border:1px solid #e5e2fa"></div>
<svg style="position:absolute;left:356px;top:1321px;" width="36" height="36" viewBox="0 0 36 36"><g transform="scale(1.0)"><path d="M2.6 20 C2.6 12.5 6.5 8.8 10.5 8.8 C15 8.8 18.5 14 22 19.5 C24.5 23.5 26.5 27 29.5 27 C32 27 33.4 24.5 33.4 20.5 C33.4 13 29.5 8.8 25.5 8.8 C21 8.8 17.5 14 14 19.5 C11.5 23.5 9.5 27 6.5 27 C4 27 2.6 24.5 2.6 20 Z" fill="none" stroke="#0866ff" stroke-width="3.9" stroke-linejoin="round"/></g></svg>
<div id="t42" style="position:absolute;left:408.5px;top:1324.7px;font-size:29.07px;line-height:29.07px;font-weight:700;color:#0a0a0a;white-space:nowrap;letter-spacing:-0.013px;">Meta (Facebook &amp; Instagram)</div>
<div style="position:absolute;left:826px;top:1319px;width:165.5px;height:39px;box-sizing:border-box;border-radius:7px;background:#f1faf3;border:1.5px solid #3aaa55"></div>
<div style="position:absolute;left:841px;top:1325px;width:24.5px;height:25px;border-radius:5px;background:#2ea650"></div>
<svg style="position:absolute;left:841px;top:1325px;" width="25" height="25" viewBox="0 0 25 25"><path d="M6 12.5 L10.5 17 L19 7.5" fill="none" stroke="#fff" stroke-width="3" stroke-linecap="round" stroke-linejoin="round"/></svg>
<div id="t43" style="position:absolute;left:873.0px;top:1325.6px;font-size:27.62px;line-height:27.62px;font-weight:700;color:#111;white-space:nowrap;letter-spacing:-0.900px;;transform:scaleX(0.9459);transform-origin:left top">On track</div>
<div style="position:absolute;left:2752px;top:1317px;width:328px;height:44px;border-radius:22px;background:#efefef"></div>
<div id="t44" style="position:absolute;left:2769.0px;top:1324.4px;font-size:29.07px;line-height:29.07px;font-weight:400;color:#111;white-space:nowrap;letter-spacing:0.394px;">80,000 / <b>150,000 SEK</b></div>
<div style="position:absolute;left:3090px;top:1331px;width:120px;height:16px;border-radius:8px;background:#efefef"></div>
<div style="position:absolute;left:3090px;top:1331px;width:74px;height:16px;border-radius:8px;background:#34a853"></div>
<div id="t45" style="position:absolute;left:3221.0px;top:1326.9px;font-size:26.16px;line-height:26.16px;font-weight:700;color:#3f4252;white-space:nowrap;letter-spacing:-0.900px;;transform:scaleX(0.9692);transform-origin:left top">53%</div>
<div style="position:absolute;left:318px;top:1404px;width:2986px;height:68px;background:#f9f8fe"></div>
<div id="t46" style="position:absolute;left:350.7px;top:1427.4px;font-size:20.78px;line-height:20.78px;font-weight:400;color:#4a3ff0;white-space:nowrap;letter-spacing:-0.198px;">Campaing name</div>
<div id="t47" style="position:absolute;left:831.0px;top:1427.4px;font-size:20.78px;line-height:20.78px;font-weight:400;color:#4a3ff0;white-space:nowrap;letter-spacing:-0.366px;">Budget</div>
<div id="t48" style="position:absolute;left:1312.0px;top:1427.4px;font-size:20.78px;line-height:20.78px;font-weight:400;color:#4a3ff0;white-space:nowrap;letter-spacing:-0.262px;">Spend</div>
<div id="t49" style="position:absolute;left:1793.0px;top:1427.4px;font-size:20.78px;line-height:20.78px;font-weight:400;color:#4a3ff0;white-space:nowrap;letter-spacing:-0.703px;">%Spend</div>
<div id="t50" style="position:absolute;left:2274.0px;top:1427.4px;font-size:20.78px;line-height:20.78px;font-weight:400;color:#4a3ff0;white-space:nowrap;letter-spacing:-0.042px;">Conversions</div>
<div id="t51" style="position:absolute;left:2980.5px;top:1427.4px;font-size:20.78px;line-height:20.78px;font-weight:400;color:#4a3ff0;white-space:nowrap;letter-spacing:0.132px;">Insights</div>
<div id="t52" style="position:absolute;left:350.5px;top:1515.3px;font-size:24.71px;line-height:24.71px;font-weight:400;color:#111;white-space:nowrap;letter-spacing:0.355px;;-webkit-text-stroke:0.35px #111">Winter offer awareness</div>
<div id="t53" style="position:absolute;left:831.0px;top:1515.3px;font-size:24.71px;line-height:24.71px;font-weight:400;color:#111;white-space:nowrap;letter-spacing:0.127px;;-webkit-text-stroke:0.35px #111">60,000 SEK</div>
<div id="t54" style="position:absolute;left:1312.0px;top:1515.3px;font-size:24.71px;line-height:24.71px;font-weight:400;color:#111;white-space:nowrap;letter-spacing:0.016px;;-webkit-text-stroke:0.35px #111">34,000 SEK</div>
<div style="position:absolute;left:1793px;top:1507.7px;width:82px;height:40.5px;border-radius:20px;background:#f0effc"></div>
<div id="t55" style="position:absolute;left:1809.4px;top:1515.3px;font-size:24.71px;line-height:24.71px;font-weight:700;color:#4a3ded;white-space:nowrap;letter-spacing:-0.527px;">57%</div>
<svg style="position:absolute;left:2272px;top:1509.8px;" width="226" height="34" viewBox="0 0 226 34"><defs><linearGradient id="sp1539" x1="0" y1="0" x2="0" y2="1"><stop offset="0" stop-color="#34a853" stop-opacity="0.35"/><stop offset="1" stop-color="#34a853" stop-opacity="0"/></linearGradient></defs><path d="M2,30 L2.0,30.0 L28.4,14.7 L62.1,25.7 L104.5,15.3 L148.6,25.7 L162.7,15.3 L179.9,5.5 L195.2,14.7 L204.4,5.5 L215.5,15.3 L222.8,30.0 Z" fill="url(#sp1539)"/><polyline points="2.0,30.0 28.4,14.7 62.1,25.7 104.5,15.3 148.6,25.7 162.7,15.3 179.9,5.5 195.2,14.7 204.4,5.5 215.5,15.3 222.8,30.0" fill="none" stroke="#34a853" stroke-width="2.2" stroke-linejoin="round"/></svg>
<div id="t56" style="position:absolute;left:2869.0px;top:1515.3px;font-size:24.71px;line-height:24.71px;font-weight:400;color:#111;white-space:nowrap;letter-spacing:-0.685px;;-webkit-text-stroke:0.35px #111">Strong CTR 2.9%</div>
<div style="position:absolute;left:3250.25px;top:1514.75px;width:7.5px;height:7.5px;border-radius:50%;background:#3a3a3a"></div>
<div style="position:absolute;left:3250.25px;top:1524.95px;width:7.5px;height:7.5px;border-radius:50%;background:#3a3a3a"></div>
<div style="position:absolute;left:3250.25px;top:1535.15px;width:7.5px;height:7.5px;border-radius:50%;background:#3a3a3a"></div>
<div style="position:absolute;left:318px;top:1582.5px;width:2986px;height:2px;background:#eeeeee"></div>
<div id="t57" style="position:absolute;left:350.5px;top:1627.7px;font-size:24.71px;line-height:24.71px;font-weight:400;color:#111;white-space:nowrap;letter-spacing:0.272px;;-webkit-text-stroke:0.35px #111">Local store conversions</div>
<div id="t58" style="position:absolute;left:831.0px;top:1627.7px;font-size:24.71px;line-height:24.71px;font-weight:400;color:#111;white-space:nowrap;letter-spacing:0.127px;;-webkit-text-stroke:0.35px #111">60,000 SEK</div>
<div id="t59" style="position:absolute;left:1312.0px;top:1627.7px;font-size:24.71px;line-height:24.71px;font-weight:400;color:#111;white-space:nowrap;letter-spacing:-0.151px;;-webkit-text-stroke:0.35px #111">32,000 SEK</div>
<div style="position:absolute;left:1793px;top:1620.1px;width:82px;height:40.5px;border-radius:20px;background:#f0effc"></div>
<div id="t60" style="position:absolute;left:1809.4px;top:1627.7px;font-size:24.71px;line-height:24.71px;font-weight:700;color:#4a3ded;white-space:nowrap;letter-spacing:-0.527px;">53%</div>
<svg style="position:absolute;left:2272px;top:1622.1999999999998px;" width="226" height="34" viewBox="0 0 226 34"><defs><linearGradient id="sp1652" x1="0" y1="0" x2="0" y2="1"><stop offset="0" stop-color="#34a853" stop-opacity="0.35"/><stop offset="1" stop-color="#34a853" stop-opacity="0"/></linearGradient></defs><path d="M2,30 L2.0,30.0 L28.4,14.7 L62.1,25.7 L104.5,15.3 L148.6,25.7 L162.7,15.3 L179.9,5.5 L195.2,14.7 L204.4,5.5 L215.5,15.3 L222.8,30.0 Z" fill="url(#sp1652)"/><polyline points="2.0,30.0 28.4,14.7 62.1,25.7 104.5,15.3 148.6,25.7 162.7,15.3 179.9,5.5 195.2,14.7 204.4,5.5 215.5,15.3 222.8,30.0" fill="none" stroke="#34a853" stroke-width="2.2" stroke-linejoin="round"/></svg>
<div id="t61" style="position:absolute;left:2769.0px;top:1627.7px;font-size:24.71px;line-height:24.71px;font-weight:400;color:#111;white-space:nowrap;letter-spacing:0.219px;;-webkit-text-stroke:0.35px #111">Slightly under CPC target</div>
<div style="position:absolute;left:3250.25px;top:1627.1499999999999px;width:7.5px;height:7.5px;border-radius:50%;background:#3a3a3a"></div>
<div style="position:absolute;left:3250.25px;top:1637.35px;width:7.5px;height:7.5px;border-radius:50%;background:#3a3a3a"></div>
<div style="position:absolute;left:3250.25px;top:1647.55px;width:7.5px;height:7.5px;border-radius:50%;background:#3a3a3a"></div>
<div style="position:absolute;left:318px;top:1694.7px;width:2986px;height:2px;background:#eeeeee"></div>
<div id="t62" style="position:absolute;left:350.5px;top:1736.6px;font-size:24.71px;line-height:24.71px;font-weight:400;color:#111;white-space:nowrap;letter-spacing:0.190px;;-webkit-text-stroke:0.35px #111">Retargeting &amp; Loyalty</div>
<div id="t63" style="position:absolute;left:350.5px;top:1767.5px;font-size:24.71px;line-height:24.71px;font-weight:400;color:#111;white-space:nowrap;letter-spacing:-0.771px;;-webkit-text-stroke:0.35px #111">Push</div>
<div id="t64" style="position:absolute;left:831.0px;top:1752.1px;font-size:24.71px;line-height:24.71px;font-weight:400;color:#111;white-space:nowrap;letter-spacing:0.049px;;-webkit-text-stroke:0.35px #111">30,000 SEK</div>
<div id="t65" style="position:absolute;left:1312.0px;top:1752.1px;font-size:24.71px;line-height:24.71px;font-weight:400;color:#111;white-space:nowrap;letter-spacing:-0.762px;;-webkit-text-stroke:0.35px #111">14,000 SEK</div>
<div style="position:absolute;left:1793px;top:1744.5px;width:82px;height:40.5px;border-radius:20px;background:#f0effc"></div>
<div id="t66" style="position:absolute;left:1809.4px;top:1752.1px;font-size:24.71px;line-height:24.71px;font-weight:700;color:#4a3ded;white-space:nowrap;letter-spacing:-0.527px;">47%</div>
<svg style="position:absolute;left:2272px;top:1746.6px;" width="226" height="34" viewBox="0 0 226 34"><defs><linearGradient id="sp1776" x1="0" y1="0" x2="0" y2="1"><stop offset="0" stop-color="#34a853" stop-opacity="0.35"/><stop offset="1" stop-color="#34a853" stop-opacity="0"/></linearGradient></defs><path d="M2,30 L2.0,30.0 L28.4,14.7 L62.1,25.7 L104.5,15.3 L148.6,25.7 L162.7,15.3 L179.9,5.5 L195.2,14.7 L204.4,5.5 L215.5,15.3 L222.8,30.0 Z" fill="url(#sp1776)"/><polyline points="2.0,30.0 28.4,14.7 62.1,25.7 104.5,15.3 148.6,25.7 162.7,15.3 179.9,5.5 195.2,14.7 204.4,5.5 215.5,15.3 222.8,30.0" fill="none" stroke="#34a853" stroke-width="2.2" stroke-linejoin="round"/></svg>
<div id="t67" style="position:absolute;left:2933.2px;top:1752.1px;font-size:24.71px;line-height:24.71px;font-weight:400;color:#111;white-space:nowrap;letter-spacing:-0.066px;;-webkit-text-stroke:0.35px #111">CPA stable</div>
<div style="position:absolute;left:3250.25px;top:1751.55px;width:7.5px;height:7.5px;border-radius:50%;background:#3a3a3a"></div>
<div style="position:absolute;left:3250.25px;top:1761.75px;width:7.5px;height:7.5px;border-radius:50%;background:#3a3a3a"></div>
<div style="position:absolute;left:3250.25px;top:1771.95px;width:7.5px;height:7.5px;border-radius:50%;background:#3a3a3a"></div>
<div style="position:absolute;left:286px;top:1891px;width:3050px;height:400px;border-radius:9px;background:#fff;box-shadow:0 4px 8px rgba(0,0,0,0.08)"></div>
<div style="position:absolute;left:350px;top:1945px;width:48px;height:48px;box-sizing:border-box;border-radius:10px;background:#f6f5fe;border:1px solid #e5e2fa"></div>
<svg style="position:absolute;left:356.5px;top:1952px;" width="32" height="32" viewBox="0 0 32 32"><g transform="scale(1.0)"><path d="M17 5 L21 5 Q21.5 10 26.5 10.5 L26.5 14.5 Q23 14.5 21 12.8 L21 21 Q21 27 15 27 Q9 27 9 21 Q9 15 15.5 15 L15.5 19 Q13 19 13 21 Q13 23 15 23 Q17 23 17 21 Z" fill="#25f4ee" transform="translate(-1.2 -1)"/><path d="M17 5 L21 5 Q21.5 10 26.5 10.5 L26.5 14.5 Q23 14.5 21 12.8 L21 21 Q21 27 15 27 Q9 27 9 21 Q9 15 15.5 15 L15.5 19 Q13 19 13 21 Q13 23 15 23 Q17 23 17 21 Z" fill="#fe2c55" transform="translate(1.2 1)"/><path d="M17 5 L21 5 Q21.5 10 26.5 10.5 L26.5 14.5 Q23 14.5 21 12.8 L21 21 Q21 27 15 27 Q9 27 9 21 Q9 15 15.5 15 L15.5 19 Q13 19 13 21 Q13 23 15 23 Q17 23 17 21 Z" fill="#000"/></g></svg>
<div id="t68" style="position:absolute;left:408.6px;top:1955.1px;font-size:29.07px;line-height:29.07px;font-weight:700;color:#0a0a0a;white-space:nowrap;letter-spacing:-0.272px;">Tiktok</div>
<div style="position:absolute;left:504px;top:1949px;width:144px;height:39.6px;box-sizing:border-box;border-radius:7px;background:#f6f8f8;border:1.5px solid #6b7078"></div>
<svg style="position:absolute;left:522px;top:1953px;" width="20" height="28" viewBox="0 0 20 28"><defs><linearGradient id="hgb" x1="0" y1="0" x2="0" y2="1"><stop offset="0" stop-color="#c8a27a"/><stop offset="1" stop-color="#8a5a34"/></linearGradient></defs><rect x="1.5" y="1.5" width="17" height="3" rx="1.2" fill="#7a4a26"/><rect x="1.5" y="23.5" width="17" height="3" rx="1.2" fill="#7a4a26"/><path d="M3.5 4.5 Q3.5 10.5 9 14 Q3.5 17.5 3.5 23.5 L16.5 23.5 Q16.5 17.5 11 14 Q16.5 10.5 16.5 4.5 Z" fill="#e3e7ea" stroke="#c9d0d4" stroke-width="0.8"/><path d="M5 6 Q6 10 10 12.5 Q14 10 15 6 Z" fill="#b48a62"/><path d="M4.3 23 Q5 18.5 10 17 Q15 18.5 15.7 23 Z" fill="url(#hgb)"/></svg>
<div id="t69" style="position:absolute;left:550.3px;top:1956.3px;font-size:24.85px;line-height:24.85px;font-weight:700;color:#111;white-space:nowrap;letter-spacing:-0.838px;">Behind</div>
<div style="position:absolute;left:2750px;top:1946px;width:330px;height:45px;border-radius:22px;background:#efefef"></div>
<div id="t70" style="position:absolute;left:2766.5px;top:1954.4px;font-size:29.07px;line-height:29.07px;font-weight:400;color:#111;white-space:nowrap;letter-spacing:0.525px;">38,000 / <b>100,000 SEK</b></div>
<div style="position:absolute;left:3089.5px;top:1961px;width:120px;height:16px;border-radius:8px;background:#efefef"></div>
<div style="position:absolute;left:3089.5px;top:1961px;width:50.5px;height:16px;border-radius:8px;background:#3b82f6"></div>
<div id="t71" style="position:absolute;left:3220.0px;top:1956.9px;font-size:26.16px;line-height:26.16px;font-weight:700;color:#3f4252;white-space:nowrap;letter-spacing:-0.900px;;transform:scaleX(0.9889);transform-origin:left top">38%</div>
<div style="position:absolute;left:318px;top:2034px;width:2986px;height:68px;background:#f9f8fe"></div>
<div id="t72" style="position:absolute;left:350.7px;top:2057.4px;font-size:20.78px;line-height:20.78px;font-weight:400;color:#4a3ff0;white-space:nowrap;letter-spacing:-0.198px;">Campaing name</div>
<div id="t73" style="position:absolute;left:831.0px;top:2057.4px;font-size:20.78px;line-height:20.78px;font-weight:400;color:#4a3ff0;white-space:nowrap;letter-spacing:-0.366px;">Budget</div>
<div id="t74" style="position:absolute;left:1312.0px;top:2057.4px;font-size:20.78px;line-height:20.78px;font-weight:400;color:#4a3ff0;white-space:nowrap;letter-spacing:-0.262px;">Spend</div>
<div id="t75" style="position:absolute;left:1793.0px;top:2057.4px;font-size:20.78px;line-height:20.78px;font-weight:400;color:#4a3ff0;white-space:nowrap;letter-spacing:-0.703px;">%Spend</div>
<div id="t76" style="position:absolute;left:2274.0px;top:2057.4px;font-size:20.78px;line-height:20.78px;font-weight:400;color:#4a3ff0;white-space:nowrap;letter-spacing:-0.042px;">Conversions</div>
<div id="t77" style="position:absolute;left:2980.5px;top:2057.4px;font-size:20.78px;line-height:20.78px;font-weight:400;color:#4a3ff0;white-space:nowrap;letter-spacing:0.132px;">Insights</div>
<div id="t78" style="position:absolute;left:350.5px;top:2145.1px;font-size:24.71px;line-height:24.71px;font-weight:400;color:#111;white-space:nowrap;letter-spacing:0.071px;;-webkit-text-stroke:0.35px #111">Franchise Investor Leads</div>
<div id="t79" style="position:absolute;left:831.0px;top:2145.1px;font-size:24.71px;line-height:24.71px;font-weight:400;color:#111;white-space:nowrap;letter-spacing:-0.095px;;-webkit-text-stroke:0.35px #111">70,000 SEK</div>
<div id="t80" style="position:absolute;left:1312.0px;top:2145.1px;font-size:24.71px;line-height:24.71px;font-weight:400;color:#111;white-space:nowrap;letter-spacing:0.016px;;-webkit-text-stroke:0.35px #111">48,000 SEK</div>
<div style="position:absolute;left:1793px;top:2137.5px;width:82px;height:40.5px;border-radius:20px;background:#f0effc"></div>
<div id="t81" style="position:absolute;left:1809.4px;top:2145.1px;font-size:24.71px;line-height:24.71px;font-weight:700;color:#4a3ded;white-space:nowrap;letter-spacing:-0.527px;">69%</div>
<svg style="position:absolute;left:2272px;top:2139.6px;" width="226" height="34" viewBox="0 0 226 34"><defs><linearGradient id="sp2169" x1="0" y1="0" x2="0" y2="1"><stop offset="0" stop-color="#3b82f6" stop-opacity="0.35"/><stop offset="1" stop-color="#3b82f6" stop-opacity="0"/></linearGradient></defs><path d="M2,30 L2.0,30.0 L28.4,14.7 L62.1,25.7 L104.5,15.3 L148.6,25.7 L162.7,15.3 L179.9,5.5 L195.2,14.7 L204.4,5.5 L215.5,15.3 L222.8,30.0 Z" fill="url(#sp2169)"/><polyline points="2.0,30.0 28.4,14.7 62.1,25.7 104.5,15.3 148.6,25.7 162.7,15.3 179.9,5.5 195.2,14.7 204.4,5.5 215.5,15.3 222.8,30.0" fill="none" stroke="#3b82f6" stroke-width="2.2" stroke-linejoin="round"/></svg>
<div id="t82" style="position:absolute;left:2869.2px;top:2145.1px;font-size:24.71px;line-height:24.71px;font-weight:400;color:#111;white-space:nowrap;letter-spacing:0.045px;;-webkit-text-stroke:0.35px #111">CPL slightly high</div>
<div style="position:absolute;left:3250.25px;top:2144.55px;width:7.5px;height:7.5px;border-radius:50%;background:#3a3a3a"></div>
<div style="position:absolute;left:3250.25px;top:2154.75px;width:7.5px;height:7.5px;border-radius:50%;background:#3a3a3a"></div>
<div style="position:absolute;left:3250.25px;top:2164.95px;width:7.5px;height:7.5px;border-radius:50%;background:#3a3a3a"></div>
<div style="position:absolute;left:318px;top:2212.8px;width:2986px;height:2px;background:#eeeeee"></div>
</body></html>
